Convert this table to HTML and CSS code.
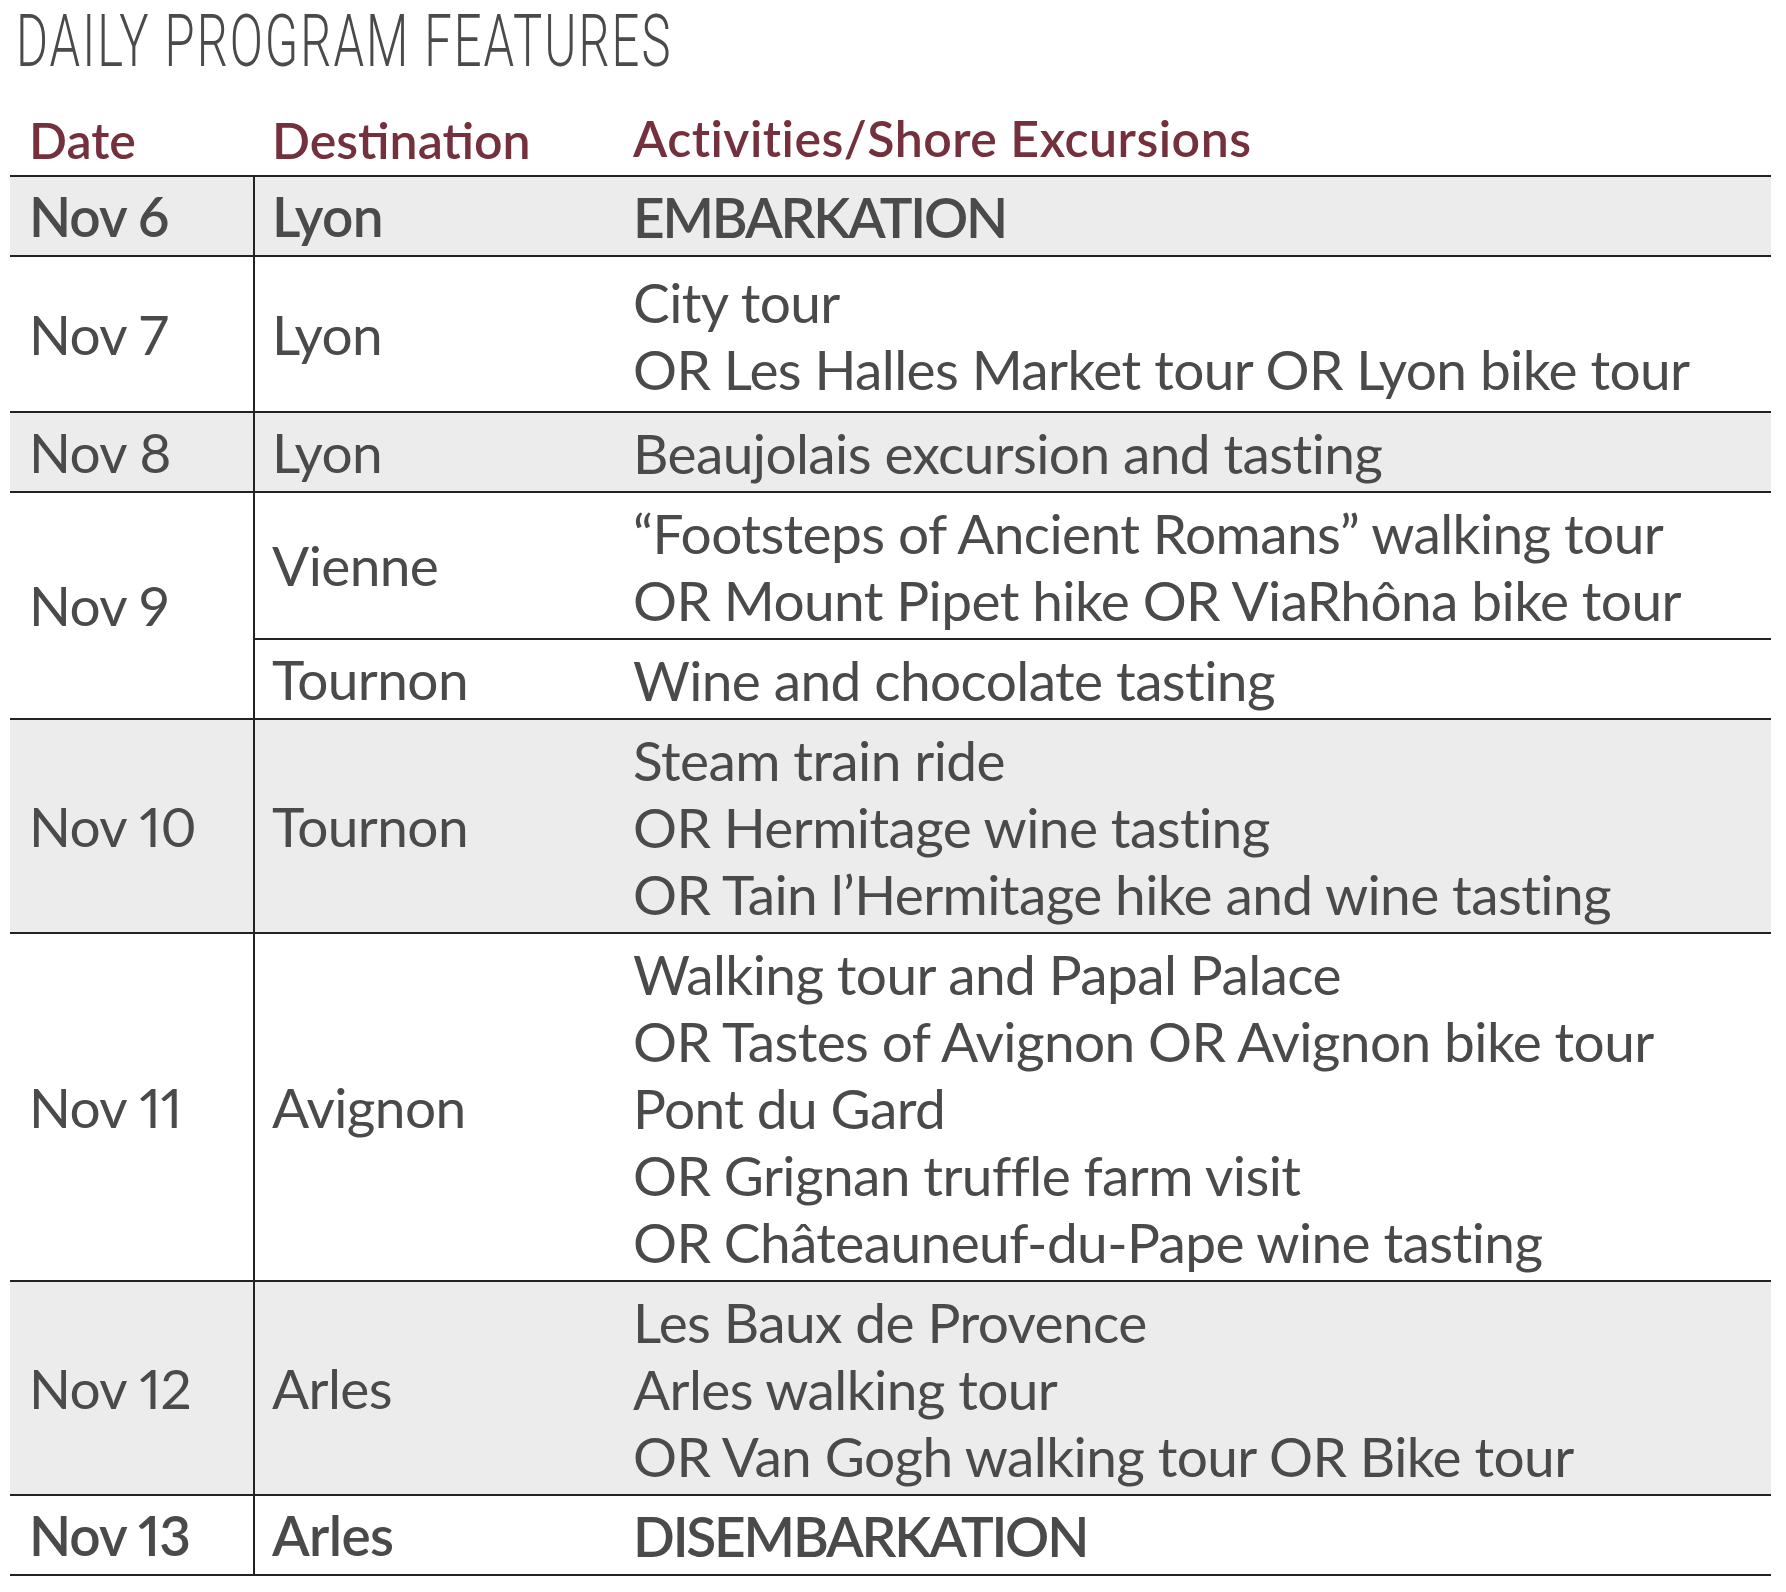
FILE: index.html
```html
<!DOCTYPE html>
<html lang="en">
<head>
<meta charset="utf-8">
<title>Daily Program Features</title>
<link rel="stylesheet" href="styles.css">
</head>
<body>
<h1 class="title">DAILY PROGRAM FEATURES</h1>
<div class="table">
  <div class="row head">
    <div class="c-date">Date</div>
    <div class="c-dest">Destination</div>
    <div class="c-acts">Activities/Shore Excursions</div>
  </div>
  <div class="row shade bold">
    <div class="c-date">Nov 6</div>
    <div class="c-dest">Lyon</div>
    <div class="c-acts"><div>EMBARKATION</div></div>
  </div>
  <div class="row tall">
    <div class="c-date">Nov 7</div>
    <div class="c-dest">Lyon</div>
    <div class="c-acts"><div>City tour</div><div>OR Les Halles Market tour OR Lyon bike tour</div></div>
  </div>
  <div class="row shade">
    <div class="c-date">Nov 8</div>
    <div class="c-dest">Lyon</div>
    <div class="c-acts"><div>Beaujolais excursion and tasting</div></div>
  </div>
  <div class="row split">
    <div class="c-date">Nov 9</div>
    <div class="subs">
      <div class="sub">
        <div class="c-dest">Vienne</div>
        <div class="c-acts"><div>“Footsteps of Ancient Romans” walking tour</div><div>OR Mount Pipet hike OR ViaRhôna bike tour</div></div>
      </div>
      <div class="sub">
        <div class="c-dest">Tournon</div>
        <div class="c-acts"><div>Wine and chocolate tasting</div></div>
      </div>
    </div>
  </div>
  <div class="row shade">
    <div class="c-date">Nov 10</div>
    <div class="c-dest">Tournon</div>
    <div class="c-acts"><div>Steam train ride</div><div>OR Hermitage wine tasting</div><div>OR Tain l’Hermitage hike and wine tasting</div></div>
  </div>
  <div class="row">
    <div class="c-date">Nov 11</div>
    <div class="c-dest">Avignon</div>
    <div class="c-acts"><div>Walking tour and Papal Palace</div><div>OR Tastes of Avignon OR Avignon bike tour</div><div>Pont du Gard</div><div>OR Grignan truffle farm visit</div><div>OR Châteauneuf-du-Pape wine tasting</div></div>
  </div>
  <div class="row shade">
    <div class="c-date">Nov 12</div>
    <div class="c-dest">Arles</div>
    <div class="c-acts"><div>Les Baux de Provence</div><div>Arles walking tour</div><div>OR Van Gogh walking tour OR Bike tour</div></div>
  </div>
  <div class="row bold">
    <div class="c-date">Nov 13</div>
    <div class="c-dest">Arles</div>
    <div class="c-acts"><div>DISEMBARKATION</div></div>
  </div>
</div>
</body>
</html>
```

FILE: styles.css
```css
* { box-sizing: border-box; }

body {
  margin: 0;
  background: #ffffff;
  color: #4a4a4a;
  font-family: Lato, "Liberation Sans", sans-serif;
  font-variant-numeric: proportional-nums;
}

.title {
  margin: 5px 0 0 16px;
  font-family: Roboto, "Liberation Sans", sans-serif;
  font-weight: 300;
  font-size: 73px;
  line-height: 73px;
  letter-spacing: 3px;
  color: #4a4a4a;
  white-space: nowrap;
  transform: scaleX(0.67);
  transform-origin: left center;
}

.table {
  margin: 27px 0 0 10px;
  width: 1761px;
}

.row {
  display: grid;
  grid-template-columns: 245px 378px 1fr;
  border-bottom: 2px solid #222222;
  font-size: 55px;
  line-height: 67px;
  letter-spacing: -0.6px;
  white-space: nowrap;
}

.row.split {
  grid-template-columns: 245px 1fr;
}

.shade { background: #ebeceb; }
.bold { font-weight: 600; }
.bold .c-date { letter-spacing: -1px; }
.bold .c-acts { letter-spacing: -2.2px; }

.c-date {
  display: flex;
  align-items: center;
  padding-left: 19px;
  border-right: 2px solid #222222;
}

.c-dest {
  display: flex;
  align-items: center;
  padding-left: 17px;
}

.c-acts {
  padding: 7px 0 4px 0;
}

.row.tall .c-acts {
  padding: 12px 0 8px 0;
}

.sub {
  display: grid;
  grid-template-columns: 378px 1fr;
}

.sub + .sub {
  border-top: 2px solid #222222;
}

.head {
  font-size: 50px;
  font-weight: 600;
  letter-spacing: 0;
  color: #74303d;
}

.head .c-date { border-right: none; }

.head .c-acts { padding: 0 0 3px 0; letter-spacing: 0.5px; }
```
